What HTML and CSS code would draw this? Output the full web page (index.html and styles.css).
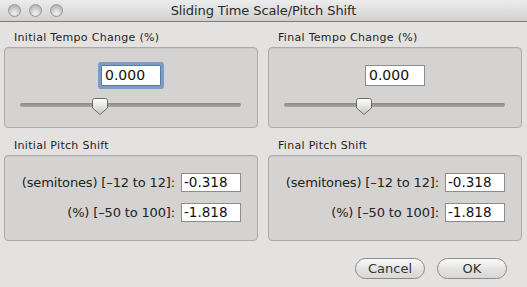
FILE: index.html
```html
<!DOCTYPE html>
<html>
	<head>
		<meta charset="utf-8" />
		<title>Sliding Time Scale/Pitch Shift</title>
		<link rel="stylesheet" href="styles.css">
	</head>
	<body>

		<div class="window">
			<div class="titlebar">
				<div class="lights">
					<span class="light"></span>
					<span class="light"></span>
					<span class="light"></span>
				</div>
				<div class="title">Sliding Time Scale/Pitch Shift</div>
			</div>

			<div class="content">
				<div class="group">
					<div class="group-label">Initial Tempo Change (%)</div>
					<div class="box tempo">
						<div class="field focus">0.000</div>
						<div class="slider">
							<div class="track"></div>
							<svg class="thumb" width="16" height="17" viewBox="0 0 16 17">
								<defs>
									<linearGradient id="tg1" x1="0" y1="0" x2="0" y2="1">
										<stop offset="0" stop-color="#ffffff" />
										<stop offset="1" stop-color="#c9c7c5" />
									</linearGradient>
								</defs>
								<path d="M2.5 0.5 H13.5 Q15.5 0.5 15.5 2.5 V10 L8 16.5 L0.5 10 V2.5 Q0.5 0.5 2.5 0.5 Z" fill="url(#tg1)" stroke="#6e6c6a" />
							</svg>
						</div>
					</div>
				</div>

				<div class="group">
					<div class="group-label">Final Tempo Change (%)</div>
					<div class="box tempo">
						<div class="field">0.000</div>
						<div class="slider">
							<div class="track"></div>
							<svg class="thumb" width="16" height="17" viewBox="0 0 16 17">
								<defs>
									<linearGradient id="tg2" x1="0" y1="0" x2="0" y2="1">
										<stop offset="0" stop-color="#ffffff" />
										<stop offset="1" stop-color="#c9c7c5" />
									</linearGradient>
								</defs>
								<path d="M2.5 0.5 H13.5 Q15.5 0.5 15.5 2.5 V10 L8 16.5 L0.5 10 V2.5 Q0.5 0.5 2.5 0.5 Z" fill="url(#tg2)" stroke="#6e6c6a" />
							</svg>
						</div>
					</div>
				</div>

				<div class="group second">
					<div class="group-label">Initial Pitch Shift</div>
					<div class="box pitch">
						<div class="row">
							<span class="row-label">(semitones) [–12 to 12]:</span>
							<span class="field small">-0.318</span>
						</div>
						<div class="row">
							<span class="row-label">(%) [–50 to 100]:</span>
							<span class="field small">-1.818</span>
						</div>
					</div>
				</div>

				<div class="group second">
					<div class="group-label">Final Pitch Shift</div>
					<div class="box pitch">
						<div class="row">
							<span class="row-label">(semitones) [–12 to 12]:</span>
							<span class="field small">-0.318</span>
						</div>
						<div class="row">
							<span class="row-label">(%) [–50 to 100]:</span>
							<span class="field small">-1.818</span>
						</div>
					</div>
				</div>
			</div>

			<div class="buttons">
				<div class="button">Cancel</div>
				<div class="button">OK</div>
			</div>
		</div>

	</body>
</html>
```

FILE: styles.css
```css
body {
	margin: 0;
	padding: 0;
	background-color: #e4e2e0;
	font-family: "Lucida Grande", "DejaVu Sans", sans-serif;
	color: #1e1e1e;
}

.window {
	width: 527px;
	height: 287px;
	overflow: hidden;
}

.titlebar {
	height: 21px;
	border-bottom: 1px solid #7e7c7a;
	background: linear-gradient(#ececec, #d2d1d0);
	position: relative;
}

.lights {
	display: flex;
	gap: 8px;
	padding: 4px 0 0 8px;
}

.light {
	width: 11px;
	height: 11px;
	border-radius: 50%;
	border: 1px solid #9a9896;
	background: radial-gradient(circle at 50% 75%, #f4f4f4, #c4c3c2 60%, #a9a8a7);
}

.title {
	position: absolute;
	left: 0;
	right: 0;
	top: 0;
	text-align: center;
	font-size: 13px;
	line-height: 22px;
	color: #2a2a2a;
	letter-spacing: -0.1px;
}

.content {
	display: grid;
	grid-template-columns: 254px 254px;
	column-gap: 10px;
	row-gap: 11px;
	padding: 9px 5px 0 4px;
}

.group-label {
	font-size: 11px;
	line-height: 14px;
	padding-left: 10px;
	margin-bottom: 2px;
	letter-spacing: 0.3px;
}

.box {
	box-sizing: border-box;
	background-color: #d5d3d1;
	border: 1px solid #adabaa;
	border-radius: 4px;
	box-shadow: inset 0 1px 1px rgba(0, 0, 0, 0.06);
}

.tempo {
	height: 81px;
	display: flex;
	flex-direction: column;
	align-items: center;
	padding-top: 17px;
}

.field {
	box-sizing: border-box;
	width: 60px;
	height: 21px;
	background-color: #ffffff;
	border: 1px solid #8e8c8a;
	font-size: 14px;
	line-height: 19px;
	padding-left: 2px;
	color: #111;
}

.tempo .field {
	padding-left: 3px;
}

.focus {
	box-shadow: 0 0 0 3px #7d9dc3;
	border-color: #5a7aa2;
	border-radius: 1px;
}

.slider {
	position: relative;
	align-self: stretch;
	margin: 12px 16px 0 15px;
	height: 17px;
}

.track {
	margin-top: 5px;
	height: 4px;
	border-radius: 2px;
	background: linear-gradient(#8a8886, #a9a7a5);
}

.thumb {
	position: absolute;
	left: 72px;
	top: 0;
}

.pitch {
	height: 86px;
	display: flex;
	flex-direction: column;
	align-items: flex-end;
	gap: 11px;
	padding: 17px 16px 0 0;
}

.row {
	display: flex;
	align-items: center;
	gap: 6px;
}

.row-label {
	font-size: 13px;
	letter-spacing: -0.15px;
	color: #222;
}

.field.small {
	width: 60px;
	height: 19px;
	line-height: 17px;
	font-size: 13.5px;
}

.buttons {
	display: flex;
	justify-content: flex-end;
	gap: 12px;
	padding: 17px 20px 0 0;
}

.button {
	box-sizing: border-box;
	width: 70px;
	height: 21px;
	border: 1px solid #8c8a88;
	border-radius: 11px;
	background: linear-gradient(#fbfbfb, #e3e2e1 55%, #d9d8d7);
	text-align: center;
	font-size: 13px;
	line-height: 19px;
	color: #333;
}
```
